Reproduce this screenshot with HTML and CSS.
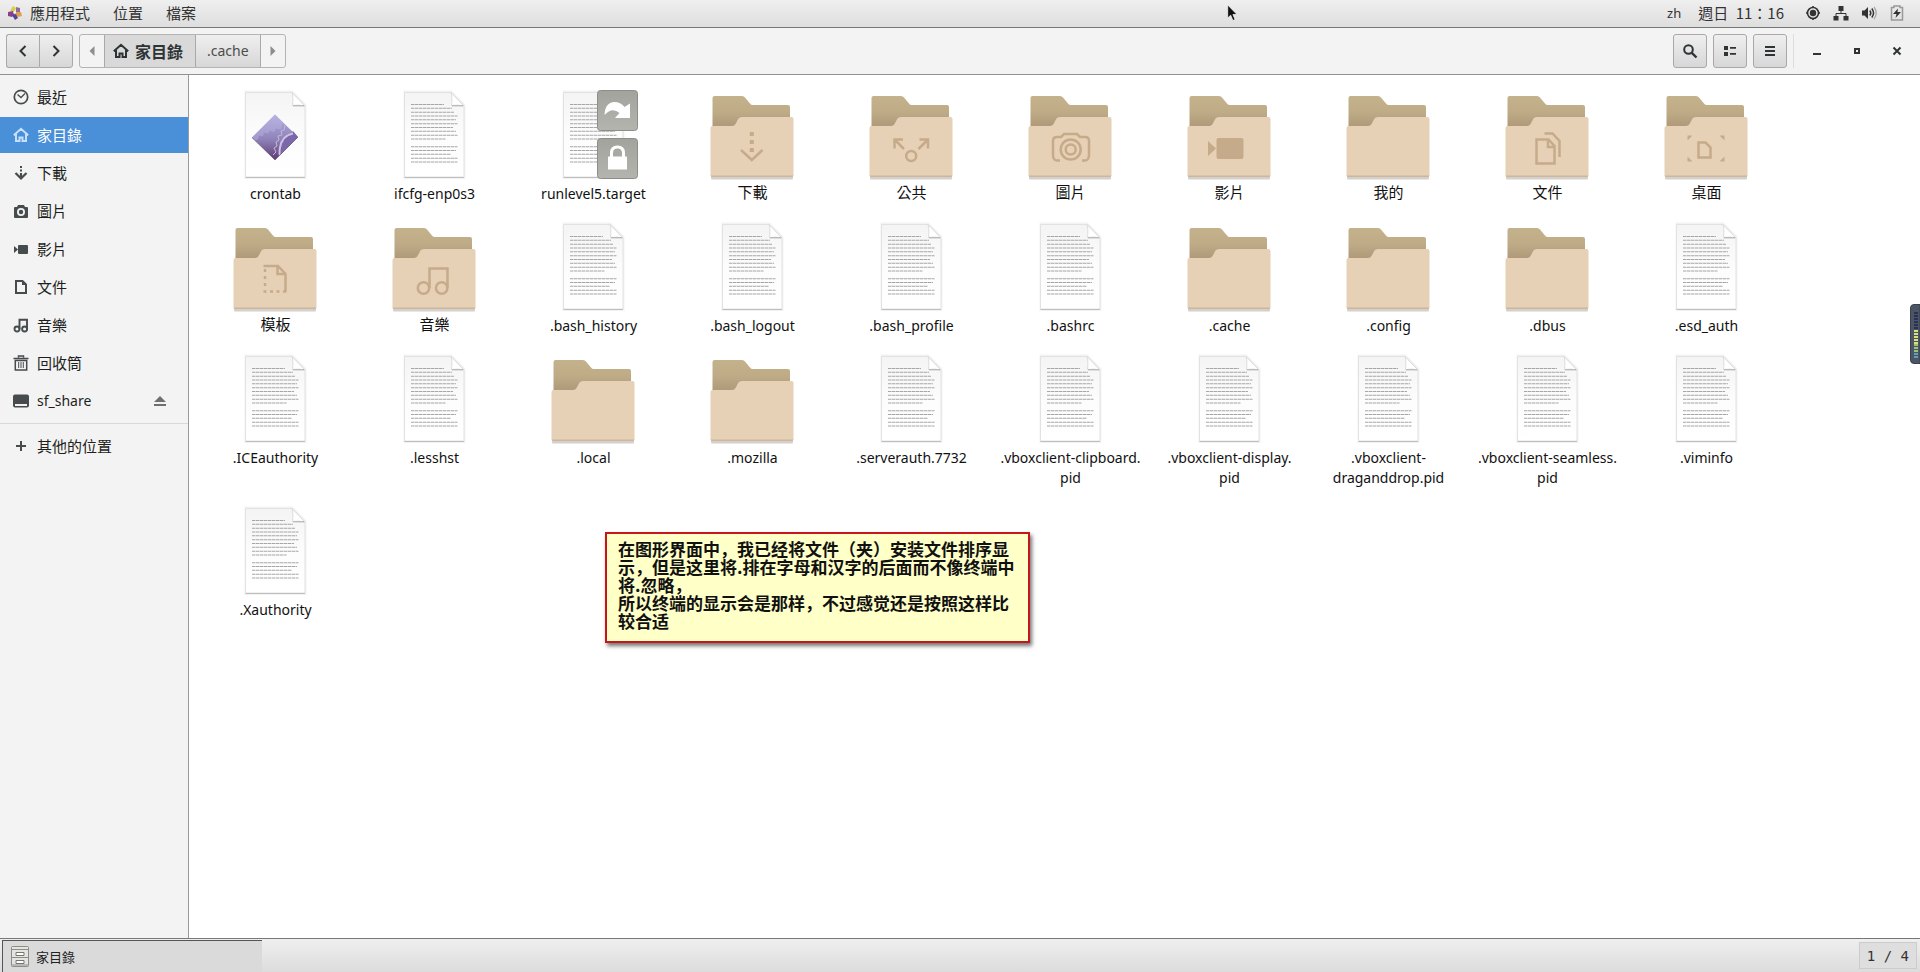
FILE: index.html
```html
<!DOCTYPE html>
<html lang="zh-Hant">
<head>
<meta charset="utf-8">
<title>家目錄</title>
<link rel="stylesheet" href="styles.css">
</head>
<body>
<svg class="sprites" width="0" height="0" aria-hidden="true">
  <defs>
    <linearGradient id="g-back" x1="0" y1="0" x2="0" y2="1"><stop offset="0" stop-color="#c4b28c"/><stop offset=".5" stop-color="#bfac87"/><stop offset="1" stop-color="#ae9878"/></linearGradient>
    <linearGradient id="g-page" x1="0" y1="0" x2="0" y2="1"><stop offset="0" stop-color="#f4f4f4"/><stop offset=".5" stop-color="#fcfcfc"/><stop offset="1" stop-color="#fff"/></linearGradient>
    <linearGradient id="g-emblem" x1="0" y1="0" x2="0" y2="1"><stop offset="0" stop-color="#a2a39c"/><stop offset="1" stop-color="#b3b4ad"/></linearGradient>
    <linearGradient id="g-gem" x1="0" y1="0" x2="0" y2="1"><stop offset="0" stop-color="#b3ade0"/><stop offset=".55" stop-color="#8f82b8"/><stop offset="1" stop-color="#5d3c70"/></linearGradient>
    <symbol id="folder" viewBox="0 0 96 96">
      <path d="M7 90h82v1.500q0 1-1 1H8q-1 0-1-1z" fill="#b5b1ab" opacity=".6"/>
      <path d="M8.500 11q0-2 2-2H38q2 0 3 1.500l5 6q1 1.500 3 1.500h35q2 0 2 2v20H8.500z" fill="url(#g-back)"/>
      <path d="M6.500 41q0-2 2-2H28q2.500 0 3.500-2l3-5.500Q35.500 30 38 30h49.500q2 0 2 2v56q0 2-2 2h-79q-2 0-2-2z" fill="#e6d1b6"/>
      <path d="M6.500 88.500h83q0 1.500-2 1.500h-79q-2 0-2-1.500z" fill="#cdb799"/>
    </symbol>
    <symbol id="page" viewBox="0 0 96 96">
      <path d="M19 5h46l13 13v72.500H19z" fill="none" stroke="#000" stroke-opacity=".05" stroke-width="3"/>
      <path d="M18.500 5.500H65l13 13.500v71H18.500z" fill="url(#g-page)" stroke="#e2e2e2"/>
      <path d="M18.500 90.500H78" stroke="#bfbfbf"/>
      <path d="M65 5.500q1.500 4 .5 13 7-1 12.500.5z" fill="#fff" stroke="#d4d4d4" stroke-width=".8"/>
      <path d="M66 18.800h11" stroke="#aaa"/>
    </symbol>
    <symbol id="text" viewBox="0 0 96 96">
      <use href="#page"/>
      <path d="M25 17.500h33M25 21.300h41M25 25.200h43M25 29h46.500M25 32.800h45M25 36.700h46.500M25 40.500h42M25 44.300h45M25 48.200h46.500M25 52h34.500M25 59.700h46.500M25 63.500h45M25 67.300h40M25 71.200h46.500M25 75h46.500" stroke="#a6a6a6" stroke-width="1.100" stroke-dasharray="3.500 .5"/>
    </symbol>
    <symbol id="crontab" viewBox="0 0 96 96">
      <use href="#page"/>
      <path d="M48 27.500 71 50 48 73 25 50.500z" fill="url(#g-gem)"/>
      <path d="M48 27.500 25 50.500l3 3 3-1 1-4 4 1 1-4 4 1 2-3 4 2 2-4 5 1 2-7z" fill="#b9b6e2" opacity=".45"/>
      <path d="M71 50 60 61l-7 7-1-3 3-3-1-4 3-3-1-3 4-2 0-3 4 0 2-3z" fill="#7a68ab"/>
      <path d="M66 46.500q-11 2-13 14-1 6 0 8" fill="none" stroke="#cdc2e3" stroke-width="2"/>
      <path d="M58 38l-1 5-3 1 1 4-4 1 1 4-3 2 1 4-3 2 2 4-3 3" fill="none" stroke="#c2b7dc" stroke-width="1"/>
      <path d="M25 50.500 48 73l23-23" fill="none" stroke="#69517f" stroke-width=".7"/>
    </symbol>
    <symbol id="linked" viewBox="0 0 96 96">
      <use href="#text"/>
      <g fill="url(#g-emblem)" stroke="#8d8e87">
        <rect x="52.500" y="3.500" width="40" height="40" rx="3"/>
        <rect x="52.500" y="51.500" width="40" height="40" rx="3"/>
      </g>
      <path d="M59.500 28Q60 15.500 69.500 15q6 0 10 5l5.500-3.500V31H70l4.500-5Q67 19.500 59.500 28z" fill="#fff"/>
      <rect x="63" y="69.500" width="19" height="13" rx=".5" fill="#fff"/>
      <path d="M66.500 70v-4q0-6 6-6t6 6v4" fill="none" stroke="#fff" stroke-width="3"/>
    </symbol>
    <symbol id="e-download" viewBox="0 0 96 96"><path d="M47.800 45v4M47.800 53v4M47.800 61v4" stroke-width="4"/><path d="m37 63 10.800 10L58.500 63"/></symbol>
    <symbol id="e-public" viewBox="0 0 96 96"><path d="M40 52.500h-8.500v9M32 53l9 9M56.500 52.500H65v9M64.500 53l-9 9"/><circle cx="48.200" cy="69" r="5"/></symbol>
    <symbol id="e-pictures" viewBox="0 0 96 96"><path d="M38 73.500h-3q-3.500 0-4-5V54q0-4 4-4h4l3-3h13l3 3h5q4 0 4 4v14.500q-.5 5-4 5h-3"/><circle cx="48.700" cy="62.500" r="10"/><circle cx="48.700" cy="62.500" r="5"/></symbol>
    <symbol id="e-video" viewBox="0 0 96 96"><path d="M27 54v15l8-7.500z" fill="#c6ab8b" stroke="none"/><rect x="35.500" y="51" width="27" height="21" rx="2" fill="#c6ab8b" stroke="none"/></symbol>
    <symbol id="e-docs" viewBox="0 0 96 96"><path d="M37.500 52.500h12l6 6.500v17.500h-18zM49 53v7h6M45.500 46.500h8l7 7.500V70"/></symbol>
    <symbol id="e-desktop" viewBox="0 0 96 96"><path d="M29.500 48.500h5l-5 5zM66.500 48.500h-5l5 5zM29.500 74.500h5l-5-5zM66.500 74.500h-5l5-5z" fill="#c6ab8b" stroke="none"/><path d="M40.500 55.500h7l5 5v10h-12z"/></symbol>
    <symbol id="e-templates" viewBox="0 0 96 96"><path d="M36.500 47H51l7.500 8v18M50.500 47v8h8"/><path d="M38 50v3M38 57v3M38 64v3M36.500 72.500h3M43 72.500h3M49.500 72.500h3M56 72.500h3"/></symbol>
    <symbol id="e-music" viewBox="0 0 96 96"><path d="M43.500 69V49.500h18V69"/><circle cx="37.500" cy="69" r="5.700"/><circle cx="55.700" cy="69" r="5.700"/></symbol>
    <symbol id="home" viewBox="0 0 16 16"><path d="M.8 8.300 8 1.800l7.200 6.500M3 7v7h3.500v-3.500h3V14H13V7" fill="none" stroke="currentColor" stroke-width="2"/></symbol>
    <symbol id="note" viewBox="0 0 16 16"><path d="M6.500 12V2.800H14V12" fill="none" stroke="currentColor" stroke-width="1.900"/><circle cx="4" cy="12" r="2.500" fill="none" stroke="currentColor" stroke-width="1.900"/><circle cx="11.600" cy="12" r="2.500" fill="none" stroke="currentColor" stroke-width="1.900"/></symbol>
  </defs>
</svg>

<div class="desktop">
  <header class="topbar">
    <nav class="menus">
      <button class="menu apps" type="button">
        <svg class="distro" viewBox="0 0 14 14"><path d="m5 0 3 2-2 4-4-1z" fill="#d8cf42"/><path d="m8 1 4 1v4L8 6z" fill="#8f6b9e"/><path d="m0 6 5-1 2 3-3 3-4-1z" fill="#8b3f8f"/><path d="m8 6 5 0 1 4-4 1-3-3z" fill="#e0a050"/><path d="m4 9 4-1 2 4-3 2z" fill="#514794"/><path d="m6 5 2 1-1 2-2-1z" fill="#fff"/></svg>
        應用程式</button>
      <button class="menu" type="button">位置</button>
      <button class="menu" type="button">檔案</button>
    </nav>
    <div class="status">
      <span class="lang">zh</span>
      <time class="clock">週日&ensp;11：16</time>
      <svg class="ico" viewBox="0 0 16 16"><circle cx="8" cy="8" r="5.500" fill="none" stroke="#333" stroke-width="1.600"/><circle cx="8" cy="8" r="3.200" fill="#333"/><path d="M8 1v2M8 13v2M1 8h2M13 8h2" stroke="#333" stroke-width="1.600"/></svg>
      <svg class="ico" viewBox="0 0 16 16"><path d="M5.500 1h5v5h-5zM.5 11h5v4.500h-5zM10.500 11h5v4.500h-5z" fill="#333"/><path d="M8 5v4M3 12V8.500h10V12" fill="none" stroke="#333"/></svg>
      <svg class="ico" viewBox="0 0 16 16"><path d="M1 5.500h2.500L7 2v12l-3.500-3.500H1z" fill="#333"/><path d="M8.800 5.500q2 2.500 0 5M10.800 3.500q3.500 4.500 0 9" fill="none" stroke="#333" stroke-width="1.500"/><path d="M13 2q4.500 6 0 12" fill="none" stroke="#aaa" stroke-width="1.300"/></svg>
      <svg class="ico" viewBox="0 0 16 16"><path d="M5 2.500V1h6v1.500h2.500v12.500h-11V2.500z" fill="none" stroke="#999" stroke-width="1.500"/><path d="m9 3.500-5 5.500h3.500l-1 4 5.500-6H8.500z" fill="#333"/></svg>
    </div>
  </header>

  <div class="toolbar">
    <div class="group">
      <button class="btn" type="button" aria-label="上一頁"><svg class="ico" viewBox="0 0 16 16"><path d="m10.500 3-5 5 5 5" fill="none" stroke="#2e3436" stroke-width="2"/></svg></button>
      <button class="btn" type="button" aria-label="下一頁"><svg class="ico" viewBox="0 0 16 16"><path d="m5.500 3 5 5-5 5" fill="none" stroke="#2e3436" stroke-width="2"/></svg></button>
    </div>
    <div class="pathbar">
      <button class="step" type="button" aria-label="向左捲動"><svg viewBox="0 0 6 10"><path d="M5.500 0v10L.5 5z" fill="#8b8e8f"/></svg></button>
      <button class="crumb current" type="button"><svg class="ico"><use href="#home"/></svg>家目錄</button>
      <button class="crumb" type="button">.cache</button>
      <button class="step" type="button" aria-label="向右捲動"><svg viewBox="0 0 6 10"><path d="M.5 0v10l5-5z" fill="#8b8e8f"/></svg></button>
    </div>
    <div class="actions">
      <button class="btn single" type="button" aria-label="搜尋"><svg class="ico" viewBox="0 0 16 16"><circle cx="6.500" cy="6.500" r="4.300" fill="none" stroke="#2e3436" stroke-width="2"/><path d="m9.800 9.800 4.700 4.700" stroke="#2e3436" stroke-width="2.400"/></svg></button>
      <button class="btn single" type="button" aria-label="檢視"><svg class="ico" viewBox="0 0 16 16"><path d="M2 3h4v4H2zM2 9h4v4H2zM8 4h6v1.800H8zM8 10h6v1.800H8z" fill="#2e3436"/></svg></button>
      <button class="btn single" type="button" aria-label="選單"><svg class="ico" viewBox="0 0 16 16"><path d="M3 3h10v2H3zM3 7h10v2H3zM3 11h10v2H3z" fill="#2e3436"/></svg></button>
    </div>
    <div class="window-controls">
      <button class="wbtn" type="button" aria-label="最小化"><svg class="ico" viewBox="0 0 16 16"><path d="M4 10h8v2H4z" fill="#2e3436"/></svg></button>
      <button class="wbtn" type="button" aria-label="最大化"><svg class="ico" viewBox="0 0 16 16"><path d="M6 6h4v4H6z" fill="none" stroke="#2e3436" stroke-width="2"/></svg></button>
      <button class="wbtn" type="button" aria-label="關閉"><svg class="ico" viewBox="0 0 16 16"><path d="m4.500 4.500 7 7m0-7-7 7" stroke="#2e3436" stroke-width="2"/></svg></button>
    </div>
  </div>

  <div class="window">
    <aside class="sidebar">
      <nav class="places">
        <a class="place" href="#recent"><svg class="ico" viewBox="0 0 16 16"><circle cx="8" cy="8" r="6.700" fill="none" stroke="currentColor" stroke-width="1.700"/><path d="m4.500 5.500 3.500 3 4-4" fill="none" stroke="currentColor" stroke-width="1.300"/></svg>最近</a>
        <a class="place selected" href="#home"><svg class="ico"><use href="#home"/></svg>家目錄</a>
        <a class="place" href="#download"><svg class="ico" viewBox="0 0 16 16"><path d="M7 1h2v2H7zM7 4.500h2v2H7z" fill="currentColor"/><path d="M8 8v5M2.500 8 8 13.500 13.500 8" fill="none" stroke="currentColor" stroke-width="2.200"/></svg>下載</a>
        <a class="place" href="#pictures"><svg class="ico" viewBox="0 0 16 16"><path fill-rule="evenodd" d="M5 2h6l1 2h2q1 0 1 1v9q0 1-1 1H2q-1 0-1-1V5q0-1 1-1h2zM8 5a4 4 0 1 0 0 8 4 4 0 0 0 0-8z" fill="currentColor"/><circle cx="8" cy="9" r="2.200" fill="currentColor"/></svg>圖片</a>
        <a class="place" href="#videos"><svg class="ico" viewBox="0 0 16 16"><path d="M1 5v7l4-3.500zM6 4h8q1 0 1 1v7q0 1-1 1H6q-1 0-1-1V5q0-1 1-1z" fill="currentColor"/></svg>影片</a>
        <a class="place" href="#documents"><svg class="ico" viewBox="0 0 16 16"><path d="M3 2h6.500L13 5.500V14H3z" fill="none" stroke="currentColor" stroke-width="2"/><path d="M9 2v4h4z" fill="currentColor"/></svg>文件</a>
        <a class="place" href="#music"><svg class="ico"><use href="#note"/></svg>音樂</a>
        <a class="place" href="#trash"><svg class="ico" viewBox="0 0 16 16"><path d="M5.500 2.500V1h5v1.500M.5 3.500h15M2.300 5.500V15h11.400V5.500z" fill="none" stroke="currentColor" stroke-width="1.500"/><path d="M5.700 7v6M8 7v6M10.300 7v6" stroke="currentColor"/></svg>回收筒</a>
        <div class="place-row">
          <a class="place latin" href="#sf_share"><svg class="ico" viewBox="0 0 16 16"><path fill-rule="evenodd" d="M2 1.500h12q2 0 2 2v9q0 2-2 2H2q-2 0-2-2v-9q0-2 2-2zM2 11v2h12v-2z" fill="currentColor"/></svg>sf_share</a>
          <button class="eject" type="button" aria-label="退出"><svg class="ico" viewBox="0 0 16 16"><path d="m8 3 6 6H2zM2 11h12v2H2z" fill="#6d7071"/></svg></button>
        </div>
      </nav>
      <nav class="places other">
        <a class="place" href="#other"><svg class="ico" viewBox="0 0 16 16"><path d="M8 3v10M3 8h10" stroke="currentColor" stroke-width="2"/></svg>其他的位置</a>
      </nav>
    </aside>

    <main class="files">
      <a class="file" href="#f"><svg><use href="#crontab"/></svg><span>crontab</span></a>
      <a class="file" href="#f"><svg><use href="#text"/></svg><span>ifcfg-enp0s3</span></a>
      <a class="file" href="#f"><svg><use href="#linked"/></svg><span>runlevel5.target</span></a>
      <a class="file cjk" href="#f"><svg><use href="#folder"/><use href="#e-download"/></svg><span>下載</span></a>
      <a class="file cjk" href="#f"><svg><use href="#folder"/><use href="#e-public"/></svg><span>公共</span></a>
      <a class="file cjk" href="#f"><svg><use href="#folder"/><use href="#e-pictures"/></svg><span>圖片</span></a>
      <a class="file cjk" href="#f"><svg><use href="#folder"/><use href="#e-video"/></svg><span>影片</span></a>
      <a class="file cjk" href="#f"><svg><use href="#folder"/></svg><span>我的</span></a>
      <a class="file cjk" href="#f"><svg><use href="#folder"/><use href="#e-docs"/></svg><span>文件</span></a>
      <a class="file cjk" href="#f"><svg><use href="#folder"/><use href="#e-desktop"/></svg><span>桌面</span></a>
      <a class="file cjk" href="#f"><svg><use href="#folder"/><use href="#e-templates"/></svg><span>模板</span></a>
      <a class="file cjk" href="#f"><svg><use href="#folder"/><use href="#e-music"/></svg><span>音樂</span></a>
      <a class="file" href="#f"><svg><use href="#text"/></svg><span>.bash_history</span></a>
      <a class="file" href="#f"><svg><use href="#text"/></svg><span>.bash_logout</span></a>
      <a class="file" href="#f"><svg><use href="#text"/></svg><span>.bash_profile</span></a>
      <a class="file" href="#f"><svg><use href="#text"/></svg><span>.bashrc</span></a>
      <a class="file" href="#f"><svg><use href="#folder"/></svg><span>.cache</span></a>
      <a class="file" href="#f"><svg><use href="#folder"/></svg><span>.config</span></a>
      <a class="file" href="#f"><svg><use href="#folder"/></svg><span>.dbus</span></a>
      <a class="file" href="#f"><svg><use href="#text"/></svg><span>.esd_auth</span></a>
      <a class="file" href="#f"><svg><use href="#text"/></svg><span>.ICEauthority</span></a>
      <a class="file" href="#f"><svg><use href="#text"/></svg><span>.lesshst</span></a>
      <a class="file" href="#f"><svg><use href="#folder"/></svg><span>.local</span></a>
      <a class="file" href="#f"><svg><use href="#folder"/></svg><span>.mozilla</span></a>
      <a class="file" href="#f"><svg><use href="#text"/></svg><span>.serverauth.7732</span></a>
      <a class="file" href="#f"><svg><use href="#text"/></svg><span>.vboxclient-clipboard.<br>pid</span></a>
      <a class="file" href="#f"><svg><use href="#text"/></svg><span>.vboxclient-display.<br>pid</span></a>
      <a class="file" href="#f"><svg><use href="#text"/></svg><span>.vboxclient-<br>draganddrop.pid</span></a>
      <a class="file" href="#f"><svg><use href="#text"/></svg><span>.vboxclient-seamless.<br>pid</span></a>
      <a class="file" href="#f"><svg><use href="#text"/></svg><span>.viminfo</span></a>
      <a class="file" href="#f"><svg><use href="#text"/></svg><span>.Xauthority</span></a>
    </main>
  </div>

  <footer class="taskbar">
    <button class="task" type="button">
      <svg viewBox="0 0 18 22"><rect x=".5" y=".5" width="17" height="20" rx="1" fill="#e4e5e0" stroke="#8b8d86"/><path d="M1 3.500h16M1 11.500h16M1 19h16" stroke="#8b8d86"/><path d="M5 6.500h8v3H5zM5 14.500h8v3H5z" fill="#fff" stroke="#74766f"/></svg>
      家目錄</button>
    <span class="workspace">1 / 4</span>
  </footer>
</div>

<p class="sticky" lang="zh-Hans">在图形界面中，我已经将文件（夹）安装文件排序显<br>示，但是这里将.排在字母和汉字的后面而不像终端中<br>将.忽略，<br>所以终端的显示会是那样，不过感觉还是按照这样比<br>较合适</p>

<svg class="meter" viewBox="0 0 10 60"><path d="M10 .5H4Q.5.500.5 4v52q0 3.500 3.500 3.500h6z" fill="#4b5563" stroke="#39424e"/><path d="M6 8v18" stroke="#2a3158" stroke-width="4" stroke-dasharray="2 1"/><path d="M6 26v14" stroke="#d8e07a" stroke-width="4" stroke-dasharray="2 1"/><path d="M6 40v9" stroke="#9cc178" stroke-width="4" stroke-dasharray="2 1"/><path d="M6 49v5" stroke="#5ca0b4" stroke-width="4" stroke-dasharray="2 1"/></svg>
<svg class="pointer" viewBox="0 0 11 18"><path d="M.7 1v13l3-2.800 2.200 5.300 2.200-1-2.200-5H10z" fill="#111" stroke="#fff" stroke-width=".7"/></svg>
</body>
</html>
```
FILE: styles.css
```css
* { box-sizing: border-box; }

body {
  margin: 0;
  position: relative;
  overflow: hidden;
  font-family: "Noto Sans", "Noto Sans CJK TC", sans-serif;
  font-size: 14px;
  line-height: 20px;
  color: #1c1f20;
}

button {
  margin: 0;
  padding: 0;
  border: 0;
  background: none;
  font: inherit;
  color: inherit;
}

a { color: inherit; text-decoration: none; }

.sprites { position: absolute; }
.ico { width: 16px; height: 16px; flex: none; display: block; }

.desktop { display: flex; flex-direction: column; min-height: 100vh; }

/* Top panel */
.topbar {
  display: flex;
  justify-content: space-between;
  align-items: center;
  height: 28px;
  padding: 0 15px 2px 8px;
  border-bottom: 1px solid #777;
  background: linear-gradient(#efefef, #dedede);
  font-family: "Noto Sans CJK TC", sans-serif;
  font-size: 15px;
  color: #333;
}
.menus { display: flex; gap: 23px; }
.menu { display: flex; align-items: center; }
.apps { gap: 8px; }
.distro { width: 14px; height: 14px; }
.status { display: flex; align-items: center; gap: 12px; }
.lang { font-family: "Noto Sans", sans-serif; font-size: 13px; }
.clock { margin: 0 9px 0 5px; }

/* Header bar */
.toolbar {
  display: flex;
  align-items: center;
  height: 47px;
  padding: 0 3px 1px 6px;
  border-bottom: 1px solid #919191;
  background: #f3f3f3;
}
.group { display: flex; margin-right: 6px; }
.btn {
  display: flex;
  align-items: center;
  justify-content: center;
  width: 33px;
  height: 34px;
  border: 1px solid #a9a9a9;
  border-radius: 3px;
  background: linear-gradient(#efefef, #d7d7d7);
}
.group .btn:first-child { border-radius: 3px 0 0 3px; border-right: 0; }
.group .btn:last-child { width: 34px; border-radius: 0 3px 3px 0; }
.btn.single { width: 34px; }
.pathbar {
  display: flex;
  height: 34px;
  border: 1px solid #b4b4b4;
  border-radius: 3px;
  overflow: hidden;
}
.step { display: flex; align-items: center; justify-content: center; width: 24px; }
.step svg { width: 6px; height: 10px; }
.crumb {
  display: flex;
  align-items: center;
  gap: 6px;
  padding: 0 11px;
  border-right: 1px solid #a9a9a9;
  background: linear-gradient(#efefef, #d7d7d7);
  color: #4a4d4e;
}
.crumb.current {
  padding: 0 12px 0 8px;
  border-left: 1px solid #a9a9a9;
  background: #d9d9d9;
  font-family: "Noto Sans CJK TC", sans-serif;
  font-size: 16px;
  font-weight: 700;
  color: #2e3436;
}
.actions { display: flex; gap: 6px; margin-left: auto; padding-right: 6px; }
.window-controls { display: flex; padding-left: 3px; border-left: 1px solid #ddd; }
.wbtn { display: flex; align-items: center; justify-content: center; width: 40px; height: 34px; }

/* Window body */
.window { display: flex; flex: 1; background: #fff; }
.sidebar {
  flex: none;
  width: 189px;
  border-right: 1px solid #9a9a9a;
  background: #f3f3f3;
}
.places { display: flex; flex-direction: column; gap: 2px; padding: 4px 0; }
.place {
  display: flex;
  align-items: center;
  gap: 8px;
  height: 36px;
  padding: 0 13px;
  font-family: "Noto Sans CJK TC", sans-serif;
  font-size: 15px;
  color: #1c1f20;
}
.place .ico { color: #464b4d; }
.place.latin { flex: 1; font-family: "Noto Sans", sans-serif; font-size: 14px; }
.place.selected { background: #4a90d9; color: #fff; }
.place.selected .ico { color: #c4e0fb; }
.place-row { display: flex; align-items: center; }
.eject { padding-right: 20px; }
.other { border-top: 1px solid #d9d9d9; }

.files {
  flex: 1;
  display: grid;
  grid-template-columns: repeat(auto-fill, 159px);
  align-content: start;
  row-gap: 15px;
  padding: 12px 7px;
}
.file {
  display: flex;
  flex-direction: column;
  align-items: center;
  gap: 1px;
  text-align: center;
  color: #111;
}
.file svg {
  width: 96px;
  height: 96px;
  margin-right: 2px;
  fill: none;
  stroke: #c6ab8b;
  stroke-width: 2.5px;
}
.file use[href="#folder"],
.file use[href="#crontab"],
.file use[href="#text"],
.file use[href="#linked"] { stroke: none; stroke-width: 1px; }
.file.cjk {
  gap: 0;
  font-family: "Noto Sans CJK TC", sans-serif;
  font-size: 15px;
  line-height: 18px;
}

/* Bottom panel */
.taskbar {
  display: flex;
  justify-content: space-between;
  align-items: stretch;
  height: 34px;
  padding: 1px 3px 0 2px;
  border-top: 1px solid #777;
  background: linear-gradient(#efefef, #dcdcdc);
}
.task {
  display: flex;
  align-items: center;
  gap: 7px;
  width: 260px;
  padding-left: 8px;
  border-top: 1px solid #555;
  border-left: 1px solid #555;
  background: #dadada;
  font-family: "Noto Sans CJK TC", sans-serif;
  font-size: 13px;
  color: #222;
}
.task svg { width: 18px; height: 22px; }
.workspace {
  display: flex;
  align-items: center;
  margin: 2px 0 3px;
  padding: 0 7px;
  border: 1px solid #ccc;
  background: #dedede;
  font-family: "DejaVu Sans Mono", monospace;
  font-size: 14px;
  color: #333;
}

/* Overlays */
.sticky {
  position: absolute;
  left: 605px;
  top: 532px;
  margin: 0;
  padding: 6px 13px 11px 11px;
  border: 2px solid #c4161c;
  background: #ffffc8;
  box-shadow: 2px 3px 4px rgba(0, 0, 0, .55);
  font-family: "Noto Sans CJK SC", sans-serif;
  font-size: 17px;
  font-weight: 700;
  line-height: 18px;
  white-space: nowrap;
  color: #111;
}
.meter { position: absolute; right: 0; top: 304px; width: 10px; height: 60px; }
.pointer { position: absolute; left: 1227px; top: 4px; width: 11px; height: 18px; }
```
